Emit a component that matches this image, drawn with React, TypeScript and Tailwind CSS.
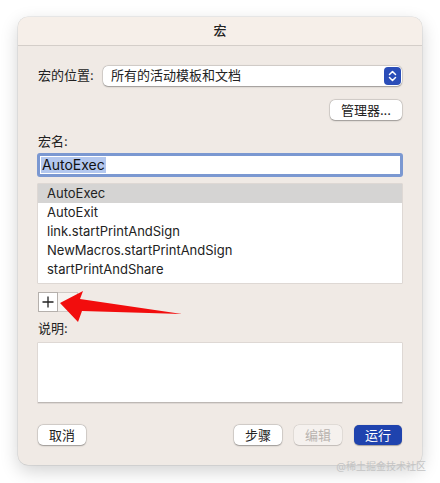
const cjk = { fontFamily: 'Inter, "Noto Sans CJK SC", sans-serif' };

function Btn({ children, w = "w-[48px]", disabled = false, primary = false }: { children: React.ReactNode; w?: string; disabled?: boolean; primary?: boolean }) {
  const base = `${w} h-[20px] rounded-[5px] flex items-center justify-center text-[13px] leading-none`;
  if (primary) return <div className={`${base} bg-[#1f43ae] text-white shadow-[0_0.5px_1px_rgba(0,0,0,0.3)]`}>{children}</div>;
  if (disabled) return <div className={`${base} bg-[#f5f1ee] text-[#b8b3af] shadow-[0_0_0_0.5px_rgba(0,0,0,0.1),0_0.5px_1px_rgba(0,0,0,0.15)]`}>{children}</div>;
  return <div className={`${base} bg-white text-[#222] shadow-[0_0_0_0.5px_rgba(0,0,0,0.15),0_0.5px_1.5px_rgba(0,0,0,0.3)]`}>{children}</div>;
}

export default function App() {
  const macros = ["AutoExec", "AutoExit", "link.startPrintAndSign", "NewMacros.startPrintAndSign", "startPrintAndShare"];
  return (
    <div className="relative w-[440px] h-[483px] bg-white pt-[17px] pl-[18px]" style={cjk}>
      <div className="w-[404px] h-[448px] rounded-[10px] overflow-hidden bg-[#f0eae5] shadow-[0_0_0_0.5px_rgba(0,0,0,0.12),0_6px_18px_rgba(0,0,0,0.18)] flex flex-col">
        <div className="h-[29px] shrink-0 bg-[#f6efe9] border-b border-[#d4cec9] flex items-center justify-center text-[13px] font-medium text-[#222]">
          宏
        </div>
        <div className="flex flex-col px-[20px] text-[13px] text-[#222]">
          <div className="mt-[20px] flex items-center h-[20px]">
            <span className="w-[65px]">宏的位置:</span>
            <div className="flex-1 h-[20px] rounded-[5px] bg-white shadow-[0_0_0_0.5px_rgba(0,0,0,0.15),0_0.5px_1.5px_rgba(0,0,0,0.3)] flex items-center pl-[8px] pr-[1px]">
              <span className="flex-1">所有的活动模板和文档</span>
              <div className="w-[17px] h-[18px] rounded-[4px] bg-[#2a4db8] flex items-center justify-center">
                <svg width="9" height="12" viewBox="0 0 9 12" fill="none" stroke="white" strokeWidth="1.5" strokeLinecap="round" strokeLinejoin="round">
                  <path d="M1.5 4.5 L4.5 1.5 L7.5 4.5" />
                  <path d="M1.5 7.5 L4.5 10.5 L7.5 7.5" />
                </svg>
              </div>
            </div>
          </div>
          <div className="mt-[14px] flex justify-end">
            <Btn w="w-[72px]">管理器...</Btn>
          </div>
          <div className="mt-[13px] h-[16px] leading-[16px]">宏名:</div>
          <div className="mt-[4px] h-[24px] border-[3px] border-[#7b98d1] rounded-[3px] bg-white flex items-center -mx-[1px] px-[1px]">
            <span className="bg-[#b3c7ee] leading-[16px] px-[1px] text-[#111] text-[14px]">AutoExec</span>
          </div>
          <div className="mt-[7px] h-[99px] bg-white shadow-[0_0_0_0.5px_rgba(0,0,0,0.15)] flex flex-col">
            {macros.map((m, i) => (
              <div key={m} className={`h-[19px] leading-[19px] pl-[9px] ${i === 0 ? "bg-[#d5d4d3]" : ""}`}>
                {m}
              </div>
            ))}
          </div>
          <div className="mt-[9px] flex">
            <div className="w-[20px] h-[20px] bg-white border border-[#b5b0ac] flex items-center justify-center">
              <svg width="12" height="12" viewBox="0 0 12 12" stroke="#222" strokeWidth="1.3">
                <path d="M6 0.5 V11.5 M0.5 6 H11.5" />
              </svg>
            </div>
            <div className="w-[20px] h-[20px] bg-[#f6f3f0] border border-l-0 border-[#cfcac6]" />
          </div>
          <div className="mt-[8px] h-[16px] leading-[16px]">说明:</div>
          <div className="mt-[7px] h-[60px] bg-white border-b border-[#bdb8b4] shadow-[0_0_0_0.5px_rgba(0,0,0,0.15)]" />
          <div className="mt-[22px] flex items-center">
            <Btn>取消</Btn>
            <div className="flex-1" />
            <Btn>步骤</Btn>
            <div className="w-[12px]" />
            <Btn disabled>编辑</Btn>
            <div className="w-[12px]" />
            <Btn primary>运行</Btn>
          </div>
        </div>
      </div>
      <svg className="absolute left-0 top-0" width="440" height="483" viewBox="0 0 440 483">
        <path d="M60 303 L83 291 L80 299 L182 314 L82 311 L78 322 Z" fill="#f20d0d" />
      </svg>
      <div className="absolute right-[14px] top-[461px] text-[10px] text-[#c4c4c4] leading-none">@稀土掘金技术社区</div>
    </div>
  );
}
